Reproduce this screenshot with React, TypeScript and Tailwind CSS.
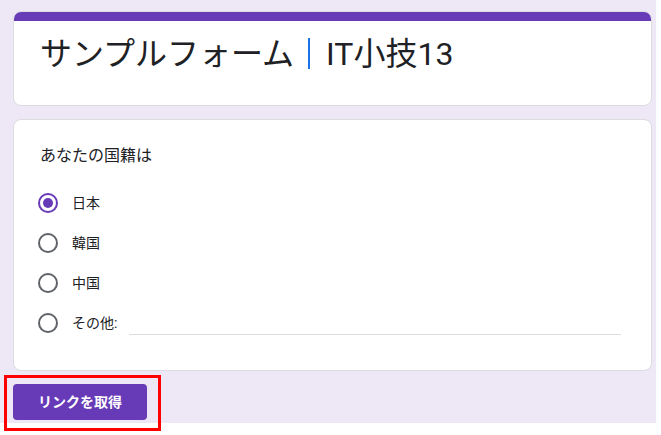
import React from "react";

const font = { fontFamily: "Roboto, 'Noto Sans CJK JP', sans-serif" };

const options = [
  { id: "ja", label: "日本", checked: true },
  { id: "ko", label: "韓国", checked: false },
  { id: "zh", label: "中国", checked: false },
];

function Radio({ checked }: { checked: boolean }) {
  return (
    <span
      className={`-ml-[2px] flex h-[20px] w-[20px] items-center justify-center rounded-full border-2 ${
        checked ? "border-[#673ab7]" : "border-[#5f6368]"
      }`}
    >
      {checked && <span className="h-[10px] w-[10px] rounded-full bg-[#673ab7]" />}
    </span>
  );
}

export default function App() {
  return (
    <div className="relative h-[435px] w-[661px] bg-white" style={font}>
      <div className="h-[423px] w-[656px] bg-[#ede7f6] pl-[13px] pt-[11px]">
        {/* Header */}
        <div className="w-[639px] overflow-hidden rounded-lg border border-[#dadce0] bg-white">
          <div className="-mx-px -mt-px h-[10px] bg-[#673ab7]" />
          <div className="flex h-[84px] items-start pl-[26px] pt-[13px] text-[32px] leading-[40px] text-[#202124]">
            <span>サンプルフォーム</span>
            <span className="ml-[14px] mr-[16px] mt-[4px] h-[31px] w-[2px] bg-[#1a73e8]" />
            <span>IT小技13</span>
          </div>
        </div>

        {/* Question */}
        <div className="mt-[13px] w-[639px] rounded-lg border border-[#dadce0] bg-white pb-[27px] pl-[26px] pt-[24px]">
          <p className="text-[16px] leading-[24px] text-[#202124]">あなたの国籍は</p>
          <div className="mt-[15px]">
            {options.map((o) => (
              <div key={o.id} className="flex h-10 items-center">
                <Radio checked={o.checked} />
                <span className="ml-[14px] text-[14px] text-[#202124]">{o.label}</span>
              </div>
            ))}
            <div className="flex h-10 items-center">
              <Radio checked={false} />
              <span className="ml-[14px] text-[14px] text-[#202124]">その他:</span>
              <div className="ml-[12px] mt-[22px] h-px w-[492px] bg-[#dadce0]" />
            </div>
          </div>
        </div>

        <button className="mt-[13px] h-[36px] w-[134px] rounded bg-[#673ab7] text-[14px] font-bold text-white">
          リンクを取得
        </button>
      </div>

      {/* annotation */}
      <div className="absolute left-[4px] top-[375px] h-[56px] w-[157px] border-[3px] border-[#ff0000]" />
    </div>
  );
}
